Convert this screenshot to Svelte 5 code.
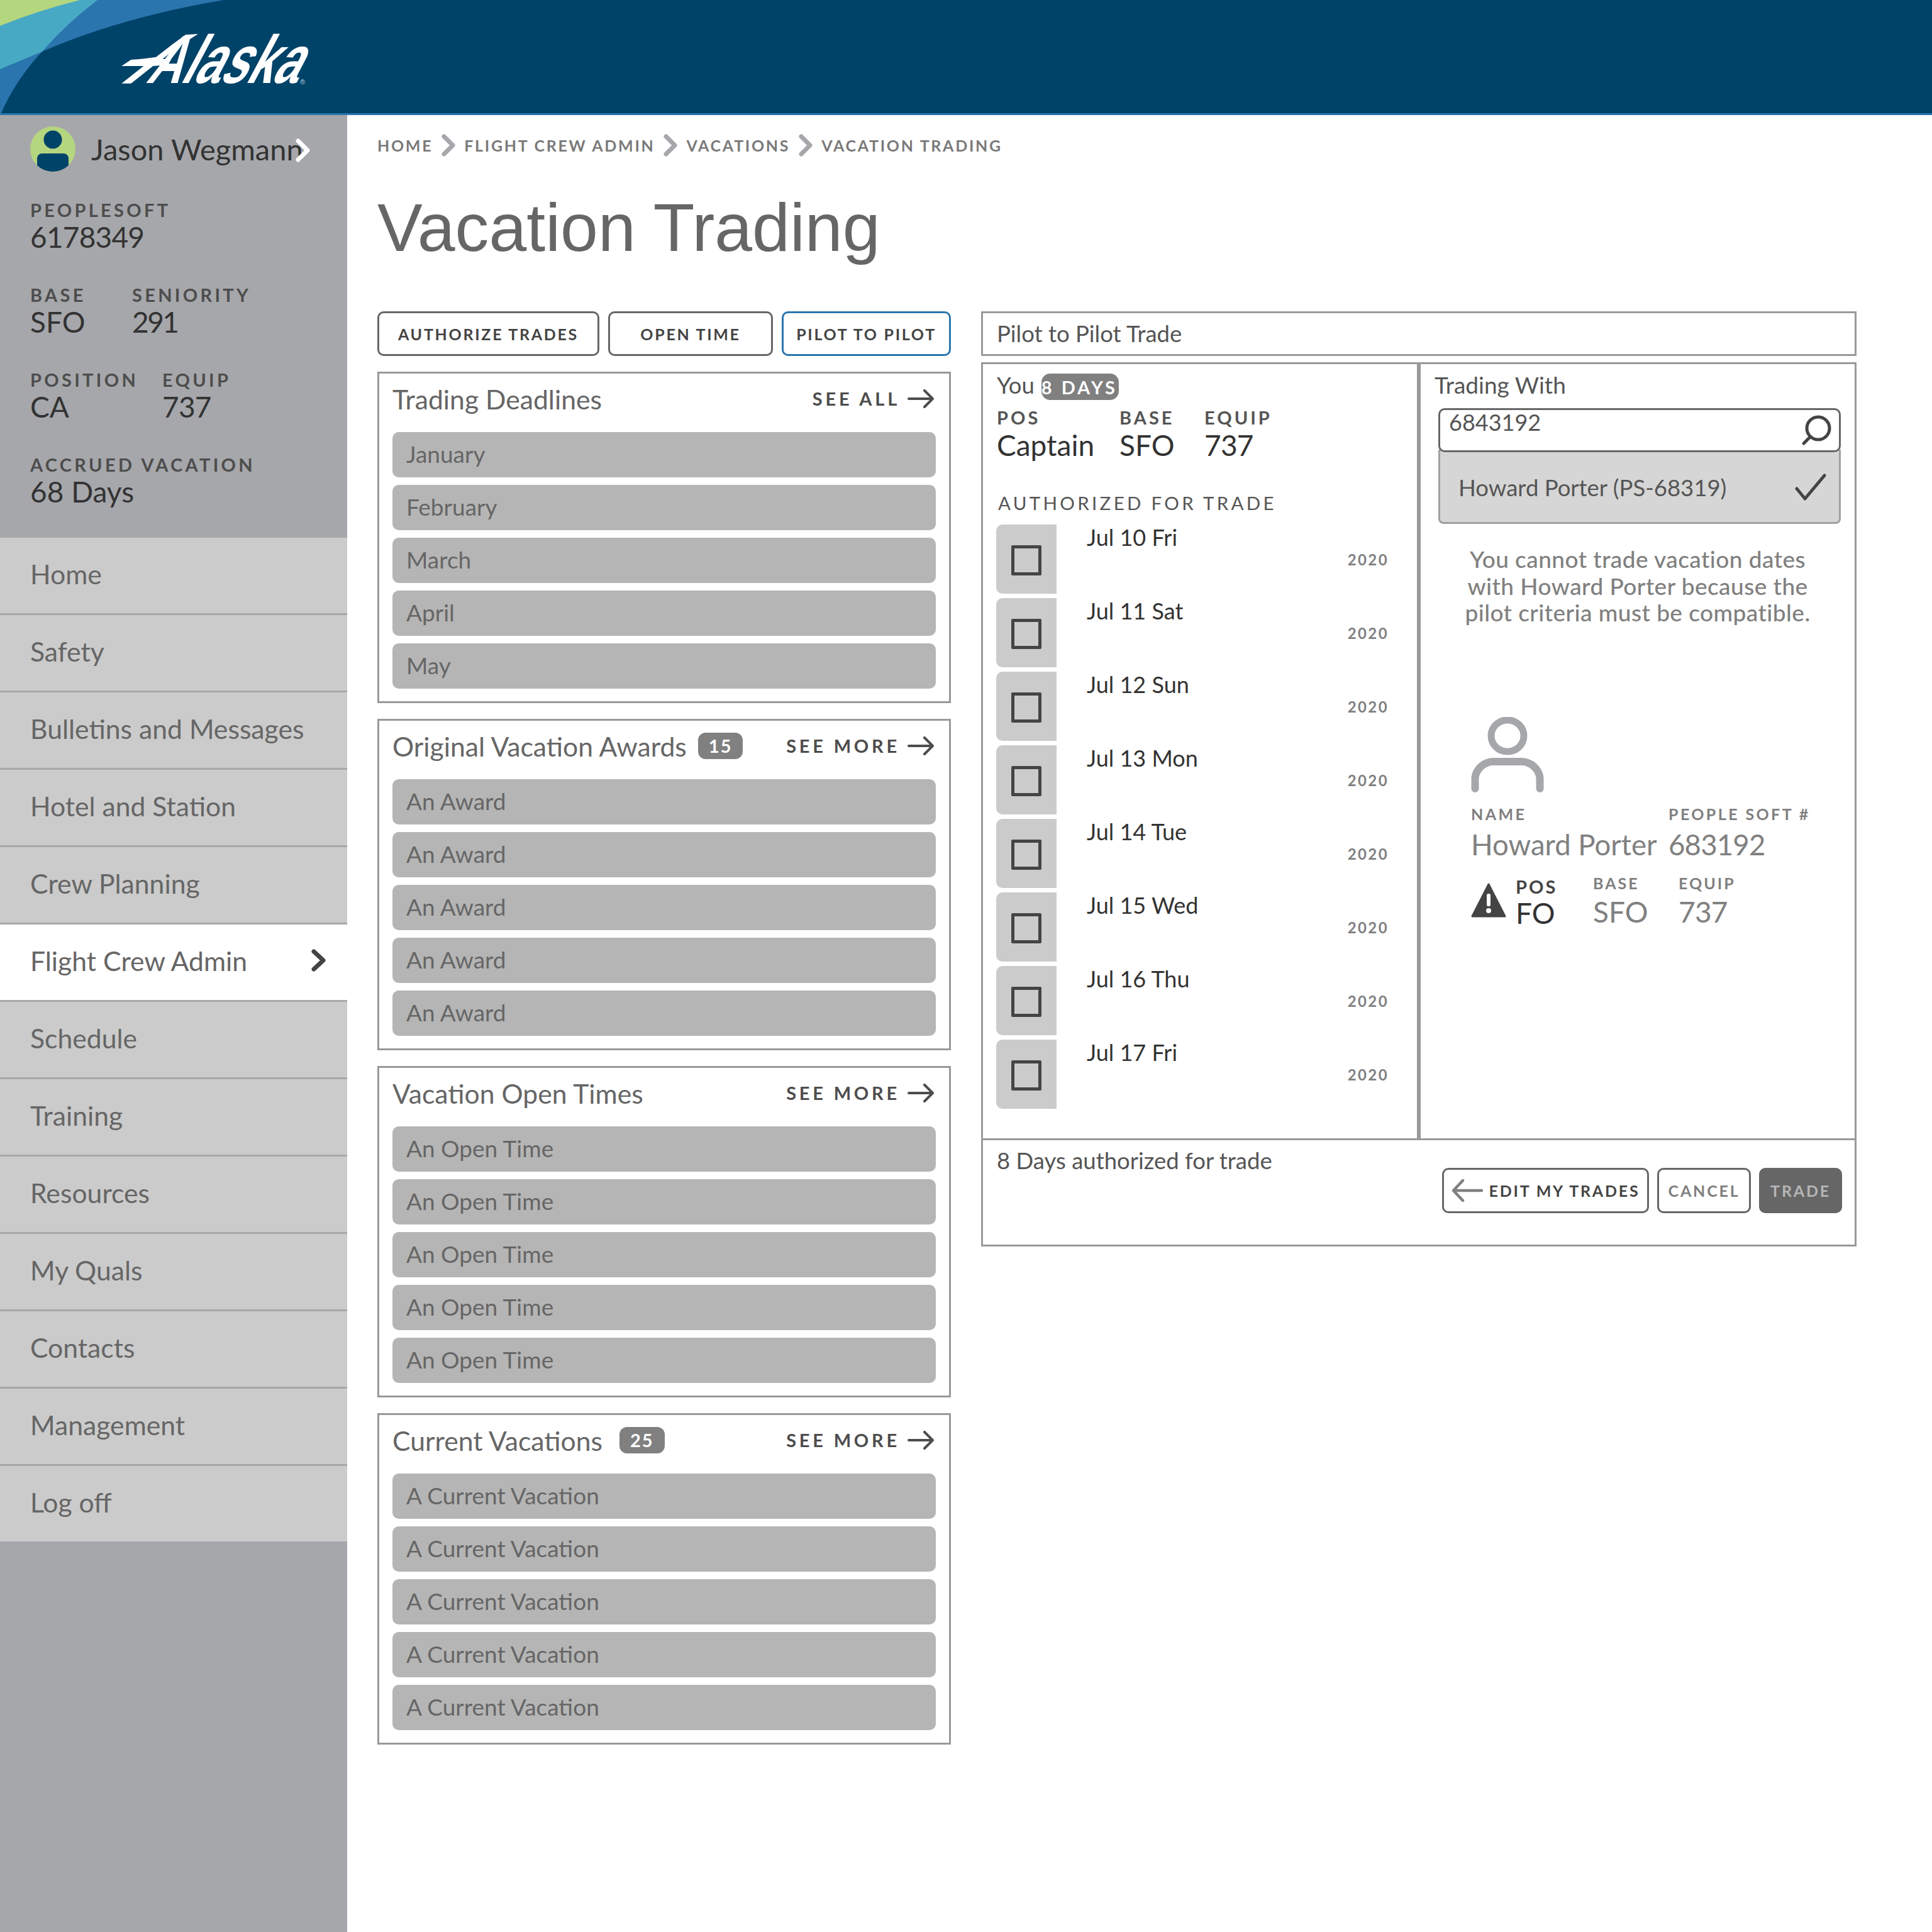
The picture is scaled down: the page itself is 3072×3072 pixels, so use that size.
<script>
	const nav = ['Home', 'Safety', 'Bulletins and Messages', 'Hotel and Station', 'Crew Planning', 'Flight Crew Admin', 'Schedule', 'Training', 'Resources', 'My Quals', 'Contacts', 'Management', 'Log off'];
	const crumbs = ['Home', 'Flight Crew Admin', 'Vacations', 'Vacation Trading'];
	const panels = [
		{ title: 'Trading Deadlines', link: 'See all', rows: ['January', 'February', 'March', 'April', 'May'] },
		{ title: 'Original Vacation Awards', badge: 15, link: 'See more', rows: Array(5).fill('An Award') },
		{ title: 'Vacation Open Times', link: 'See more', rows: Array(5).fill('An Open Time') },
		{ title: 'Current Vacations', badge: 25, wide: true, link: 'See more', rows: Array(5).fill('A Current Vacation') }
	];
	const days = ['Jul 10 Fri', 'Jul 11 Sat', 'Jul 12 Sun', 'Jul 13 Mon', 'Jul 14 Tue', 'Jul 15 Wed', 'Jul 16 Thu', 'Jul 17 Fri'];
</script>

<header class="topbar">
	<svg class="swoosh" width="360" height="180" viewBox="0 0 360 180" aria-hidden="true">
		<path fill="#2a75ad" d="M0 0H356Q190 28 67 82Q24 128 2 180H0Z" />
		<path fill="#48a9c5" d="M0 0H155Q105 38 67 82L0 110Z" />
		<path fill="#b4d67f" d="M0 0H127Q60 17 0 41Z" />
	</svg>
	<div class="logo">
		<svg class="flourish" width="320" height="110" viewBox="0 0 960 330" aria-hidden="true">
			<path fill="#fff" d="M405 42L345 46Q270 100 205 152Q150 160 85 165L40 195H145L40 278H85L190 195L262 190L278 160L235 162Q310 100 405 42Z" />
		</svg>
		<span class="wordmark">Alaska</span>
		<span class="reg">®</span>
	</div>
</header>

<div class="layout">
	<aside class="sidebar">
		<div class="profile">
			<div class="user">
				<svg width="72" height="72" viewBox="0 0 72 72" aria-hidden="true">
					<defs><clipPath id="av"><circle cx="36" cy="36" r="36" /></clipPath></defs>
					<circle cx="36" cy="36" r="36" fill="#b4d67f" />
					<g clip-path="url(#av)" fill="#004369">
						<circle cx="36" cy="21" r="14.5" />
						<rect x="11" y="43" width="50" height="40" rx="8" />
					</g>
				</svg>
				<span class="user-name">Jason Wegmann</span>
				<svg class="user-chev" width="24" height="38" viewBox="0 0 24 38" aria-hidden="true">
					<path d="M4 4L19 19L4 34" fill="none" stroke="#fff" stroke-width="7" stroke-linecap="round" stroke-linejoin="round" />
				</svg>
			</div>
			<div class="stat"><small>PEOPLESOFT</small><b class="num">6178349</b></div>
			<div class="stat-row">
				<div class="stat w-base"><small>BASE</small><b>SFO</b></div>
				<div class="stat"><small>SENIORITY</small><b class="tight">291</b></div>
			</div>
			<div class="stat-row">
				<div class="stat w-pos"><small>POSITION</small><b>CA</b></div>
				<div class="stat"><small>EQUIP</small><b class="num">737</b></div>
			</div>
			<div class="stat"><small>ACCRUED VACATION</small><b>68 Days</b></div>
		</div>
		<nav class="nav">
			{#each nav as item}
				<a href="#top" class:active={item === 'Flight Crew Admin'}>
					{item}
					{#if item === 'Flight Crew Admin'}
						<svg width="24" height="36" viewBox="0 0 24 36" aria-hidden="true">
							<path d="M4 4L19 18L4 32" fill="none" stroke="#444" stroke-width="7" stroke-linecap="round" stroke-linejoin="round" />
						</svg>
					{/if}
				</a>
			{/each}
		</nav>
	</aside>

	<main class="main">
		<div class="breadcrumb">
			{#each crumbs as crumb, i}
				{#if i > 0}
					<svg width="22" height="36" viewBox="0 0 22 36" aria-hidden="true">
						<path d="M4 4L18 18L4 32" fill="none" stroke="#a6a7ab" stroke-width="7" stroke-linecap="round" stroke-linejoin="round" />
					</svg>
				{/if}
				<span>{crumb}</span>
			{/each}
		</div>
		<h1>Vacation Trading</h1>

		<div class="columns">
			<div class="left">
				<div class="tabs">
					<button class="tab t1">AUTHORIZE TRADES</button>
					<button class="tab t2">OPEN TIME</button>
					<button class="tab t3">PILOT TO PILOT</button>
				</div>
				{#each panels as panel}
					<section class="panel">
						<div class="panel-head">
							<h2>{panel.title}</h2>
							{#if panel.badge}<span class="count" class:wide={panel.wide}>{panel.badge}</span>{/if}
							<a href="#top" class="more">
								{panel.link}
								<svg width="42" height="30" viewBox="0 0 42 30" aria-hidden="true">
									<path d="M2 15H40M27 2L40 15L27 28" fill="none" stroke="#4d4d4d" stroke-width="4" stroke-linecap="round" stroke-linejoin="round" />
								</svg>
							</a>
						</div>
						<ul>
							{#each panel.rows as row}<li>{row}</li>{/each}
						</ul>
					</section>
				{/each}
			</div>

			<div class="right">
				<div class="trade-title">Pilot to Pilot Trade</div>
				<div class="trade-box">
					<div class="trade-cols">
						<div class="you">
							<div class="you-head">You <span class="days-badge">8 DAYS</span></div>
							<div class="you-meta">
								<div class="m1"><small>POS</small><b>Captain</b></div>
								<div class="m2"><small>BASE</small><b>SFO</b></div>
								<div><small>EQUIP</small><b class="num">737</b></div>
							</div>
							<div class="auth-label">AUTHORIZED FOR TRADE</div>
							<div class="day-list">
								{#each days as day}
									<div class="day">
										<div class="check-cell"><span class="check"></span></div>
										<span class="day-name">{day}</span>
										<span class="year">2020</span>
									</div>
								{/each}
							</div>
						</div>

						<div class="with">
							<div class="with-head">Trading With</div>
							<div class="combo">
								<div class="search">
									<span>6843192</span>
									<svg width="50" height="50" viewBox="0 0 50 50" aria-hidden="true">
										<circle cx="27" cy="22" r="18" fill="none" stroke="#444" stroke-width="5" />
										<path d="M14 36L4 46" stroke="#444" stroke-width="5" stroke-linecap="round" />
									</svg>
								</div>
								<div class="option">
									<span>Howard Porter (PS-68319)</span>
									<svg width="50" height="44" viewBox="0 0 50 44" aria-hidden="true">
										<path d="M3 24L16 40L47 3" fill="none" stroke="#444" stroke-width="5" stroke-linecap="round" stroke-linejoin="round" />
									</svg>
								</div>
							</div>
							<p class="message">You cannot trade vacation dates<br />with Howard Porter because the<br />pilot criteria must be compatible.</p>
							<svg class="person" width="116" height="120" viewBox="0 0 116 120" aria-hidden="true">
								<ellipse cx="58" cy="30" rx="26" ry="25" fill="none" stroke="#a6a7ab" stroke-width="11" />
								<path d="M6.5 114V96A30 30 0 0 1 36 71H80A30 30 0 0 1 109.5 96V114" fill="none" stroke="#a6a7ab" stroke-width="12" stroke-linecap="round" />
							</svg>
							<div class="pilot-names">
								<div class="n1"><small>NAME</small><b>Howard Porter</b></div>
								<div><small>PEOPLE SOFT #</small><b class="num">683192</b></div>
							</div>
							<div class="pilot-meta">
								<svg width="56" height="56" viewBox="0 0 56 56" aria-hidden="true">
									<path d="M28 2L54 53H2Z" fill="#444" stroke="#444" stroke-width="3" stroke-linejoin="round" />
									<rect x="25" y="17" width="6" height="20" rx="2.5" fill="#fff" />
									<circle cx="28" cy="44" r="4" fill="#fff" />
								</svg>
								<div class="pos"><small>POS</small><b>FO</b></div>
								<div class="p2"><small>BASE</small><b>SFO</b></div>
								<div class="p3"><small>EQUIP</small><b class="num">737</b></div>
							</div>
						</div>
					</div>

					<div class="trade-foot">
						<span class="foot-text">8 Days authorized for trade</span>
						<div class="actions">
							<button class="btn edit">
								<svg width="50" height="36" viewBox="0 0 50 36" aria-hidden="true">
									<path d="M48 18H4M18 2L3 18L18 34" fill="none" stroke="#808080" stroke-width="4.5" stroke-linecap="round" stroke-linejoin="round" />
								</svg>
								EDIT MY TRADES
							</button>
							<button class="btn cancel">CANCEL</button>
							<button class="btn trade">TRADE</button>
						</div>
					</div>
				</div>
			</div>
		</div>
	</main>
</div>

<style>
	:global(body) {
		margin: 0;
		background: #fff;
		font-family: Lato, "Open Sans", sans-serif;
		color: #666;
	}
	small, b { display: block; font-weight: 400; }
	button { font-family: inherit; cursor: pointer; background: #fff; padding: 0; }
	h1, h2, p, ul { margin: 0; padding: 0; }
	a { text-decoration: none; color: inherit; }
	.num { letter-spacing: -0.8px; }
	.tight { letter-spacing: -2.5px; }

	/* Top bar */
	.topbar {
		position: relative;
		height: 180px;
		background: #004369;
		border-bottom: 3px solid #2a75ad;
		overflow: hidden;
	}
	.swoosh { position: absolute; left: 0; top: 0; }
	.logo { position: absolute; left: 180px; top: 40px; width: 320px; height: 110px; }
	.flourish { position: absolute; left: 0; top: 0; }
	.wordmark {
		position: absolute;
		left: 50px;
		top: 0;
		font: 700 108px/110px "Liberation Sans", sans-serif;
		color: #fff;
		transform: skewX(-28deg) scaleX(0.69);
		transform-origin: left 93px;
	}
	.reg { position: absolute; left: 297px; top: 84px; font: 400 11px/12px "Liberation Sans", sans-serif; color: #b9cfdc; }

	.layout { display: grid; grid-template-columns: 552px 1fr; height: 2889px; }

	/* Sidebar */
	.sidebar { background: #a6a7ab; }
	.profile { height: 672px; box-sizing: border-box; padding: 18px 48px 0; display: flex; flex-direction: column; gap: 49px; }
	.user { display: flex; align-items: center; height: 72px; gap: 25px; margin-bottom: -3px; position: relative; }
	.user-name { font-size: 47px; color: #333; white-space: nowrap; }
	.user-chev { position: absolute; left: 422px; top: 19px; }
	.stat small { font-size: 29px; line-height: 30px; letter-spacing: 4.3px; color: #4d4d4d; font-weight: 700; white-space: nowrap; }
	.stat b { font-size: 46px; line-height: 56px; color: #333; }
	.stat-row { display: flex; }
	.w-base { width: 162px; }
	.w-pos { width: 210px; }

	.nav a {
		display: flex;
		align-items: center;
		justify-content: space-between;
		box-sizing: border-box;
		height: 123px;
		padding: 0 33px 6px 48px;
		background: #cbcbcb;
		border-bottom: 3px solid #a6a7ab;
		font-size: 42.7px;
		color: #666;
	}
	.nav a.active { background: #fff; }
	.nav a:last-child { border-bottom: 0; height: 120px; }

	/* Main */
	.main { padding: 24px 0 0 48px; }
	.breadcrumb { display: flex; align-items: center; height: 48px; gap: 14px; }
	.breadcrumb span { font-size: 25px; font-weight: 700; letter-spacing: 2.7px; text-transform: uppercase; color: #7a7a7a; }
	h1 {
		font: 400 107.6px/120px "Liberation Sans", sans-serif;
		color: #666;
		margin-top: 47px;
		height: 120px;
	}
	.columns { display: flex; gap: 48px; margin-top: 73px; align-items: flex-start; }
	.left { width: 912px; }

	.tabs { display: flex; gap: 14px; height: 71px; margin-bottom: 25px; }
	.tab {
		box-sizing: border-box;
		height: 71px;
		border: 3px solid #666;
		border-radius: 10px;
		font-size: 25px;
		font-weight: 700;
		letter-spacing: 2.7px;
		color: #444;
	}
	.t1 { width: 353px; }
	.t2 { width: 262px; }
	.t3 { width: 269px; border-color: #2a75ad; }

	.panel {
		box-sizing: border-box;
		height: 527px;
		margin-bottom: 25px;
		border: 3px solid #999;
		padding: 0 21px;
	}
	.panel-head { display: flex; align-items: center; height: 81px; margin-bottom: 12px; }
	h2 { font-size: 42.7px; font-weight: 400; color: #666; }
	.count {
		margin-left: 18px;
		height: 42px;
		line-height: 42px;
		padding: 0 17px;
		border-radius: 12px;
		background: #808080;
		color: #fff;
		font-size: 29px;
		font-weight: 700;
		letter-spacing: 2px;
		margin-top: -2px;
	}
	.count.wide { margin-left: 27px; }
	.more {
		margin-left: auto;
		margin-right: 3px;
		display: flex;
		align-items: center;
		gap: 12px;
		font-size: 29px;
		font-weight: 700;
		letter-spacing: 4.8px;
		text-transform: uppercase;
		color: #4d4d4d;
		margin-top: -2px;
	}
	ul { list-style: none; display: flex; flex-direction: column; gap: 12px; }
	li {
		height: 72px;
		line-height: 70px;
		padding-left: 22px;
		background: #b5b5b5;
		border-radius: 10px;
		font-size: 37px;
		color: #666;
	}

	/* Trade */
	.right { width: 1392px; }
	.trade-title {
		box-sizing: border-box;
		height: 71px;
		line-height: 65px;
		border: 3px solid #999;
		padding-left: 22px;
		font-size: 36.5px;
		color: #555;
		margin-bottom: 10px;
	}
	.trade-box { box-sizing: border-box; height: 1406px; border: 3px solid #999; }
	.trade-cols { display: flex; height: 1231px; border-bottom: 3px solid #999; box-sizing: content-box; }

	.you { box-sizing: border-box; flex: none; width: 693px; border-right: 3px solid #999; padding: 10px 0 0 22px; }
	.you-head { height: 46px; line-height: 46px; font-size: 36.5px; color: #555; display: flex; gap: 11px; }
	.days-badge {
		height: 42px;
		line-height: 44px;
		margin-top: 5px;
		border-radius: 14px;
		background: #808080;
		color: #fff;
		font-size: 29px;
		font-weight: 700;
		letter-spacing: 4px;
		width: 123px;
		white-space: nowrap;
		overflow: hidden;
	}
	.you-meta { display: flex; margin-top: 14px; }
	.you-meta small { font-size: 29px; line-height: 30px; font-weight: 700; letter-spacing: 4px; color: #555; }
	.you-meta b { font-size: 46px; line-height: 54px; color: #333; margin-top: 2px; }
	.m1 { width: 195px; }
	.m2 { width: 135px; }
	.auth-label { margin-top: 48px; height: 34px; line-height: 34px; font-size: 29.5px; letter-spacing: 4.3px; color: #555; padding-left: 2px; }
	.day-list { margin-top: 17px; display: flex; flex-direction: column; gap: 7px; margin-left: -1px; }
	.day { display: flex; height: 110px; padding-right: 45px; }
	.check-cell {
		width: 96px;
		height: 110px;
		background: #cbcbcb;
		border-radius: 10px 0 0 10px;
		display: flex;
		align-items: center;
		justify-content: center;
	}
	.check { box-sizing: border-box; width: 48px; height: 48px; border: 5px solid #444; border-radius: 2px; margin-top: 3px; }
	.day-name { margin-left: 48px; font-size: 36px; line-height: 40px; color: #333; }
	.year { margin-left: auto; align-self: center; font-size: 24px; font-weight: 700; letter-spacing: 2.4px; color: #808080; }

	.with { flex: 1; min-width: 0; border-left: 3px solid #999; padding: 10px 0 0 22px; }
	.with-head { height: 46px; line-height: 46px; font-size: 37px; color: #555; }
	.combo { margin: 14px 0 0 6px; width: 640px; }
	.search {
		box-sizing: border-box;
		height: 70px;
		border: 3px solid #666;
		border-radius: 10px;
		background: #fff;
		padding: 0 10px 0 14px;
		display: flex;
		justify-content: space-between;
		position: relative;
		font-size: 36px;
		line-height: 38px;
		color: #555;
	}
	.search svg { margin-top: 7px; }
	.option {
		box-sizing: border-box;
		height: 118px;
		margin-top: -4px;
		padding: 4px 20px 0 29px;
		background: #d6d6d6;
		border: 3px solid #a0a0a0;
		border-top: 0;
		border-radius: 0 0 8px 8px;
		display: flex;
		align-items: center;
		justify-content: space-between;
		font-size: 36.5px;
		color: #555;
	}
	.message {
		margin-top: 35px;
		text-align: center;
		width: 646px;
		white-space: nowrap;
		font-size: 37px;
		font-weight: 500;
		letter-spacing: 0.45px;
		line-height: 42.5px;
		color: #808080;
	}
	.person { display: block; margin: 144px 0 0 58px; }
	.pilot-names { display: flex; margin: 20px 0 0 58px; }
	.n1 { width: 314px; }
	.pilot-names small { font-size: 25px; line-height: 28px; font-weight: 700; letter-spacing: 3.4px; color: #808080; }
	.pilot-names b { font-size: 45.5px; line-height: 56px; margin-top: 7px; color: #808080; white-space: nowrap; }
	.pilot-meta { display: flex; margin: 19px 0 0 58px; }
	.pilot-meta svg { margin-top: 14px; }
	.pilot-meta small { font-size: 25px; line-height: 28px; font-weight: 700; letter-spacing: 3px; color: #808080; }
	.pilot-meta b { font-size: 46px; line-height: 56px; color: #808080; margin-top: 4px; }
	.pos { margin-left: 15px; width: 123px; padding-top: 6px; }
	.pos small { font-size: 29px; color: #444; }
	.pos b { color: #333; margin-top: 0; }
	.p2 { width: 136px; }

	.trade-foot { display: flex; justify-content: space-between; padding: 10px 20px 0 22px; height: 166px; box-sizing: border-box; }
	.foot-text { font-size: 36.5px; line-height: 44px; color: #555; }
	.actions { display: flex; gap: 13px; margin-top: 34px; }
	.btn {
		box-sizing: border-box;
		height: 72px;
		border: 3px solid #666;
		border-radius: 10px;
		font-size: 25px;
		font-weight: 700;
		letter-spacing: 2.8px;
		display: flex;
		align-items: center;
		justify-content: center;
	}
	.edit { width: 329px; color: #444; gap: 10px; }
	.cancel { width: 149px; color: #808080; }
	.trade { width: 132px; background: #666; color: #b5b5b5; }
</style>
